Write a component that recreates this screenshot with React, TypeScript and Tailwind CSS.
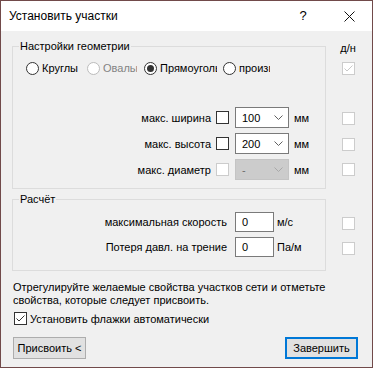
import React from "react";

function Check({ checked, disabled }: { checked?: boolean; disabled?: boolean }) {
  return (
    <span
      className={`flex h-[13px] w-[13px] shrink-0 items-center justify-center border bg-white ${
        disabled ? "border-[#cccccc]" : "border-[#333333]"
      }`}
    >
      {checked ? (
        <svg width="11" height="11" viewBox="0 0 11 11">
          <path d="M1.5 5.5 L4 8 L9.5 2.5" fill="none" stroke={disabled ? "#c8c8c8" : "#333333"} strokeWidth="1" />
        </svg>
      ) : null}
    </span>
  );
}

function Radio({ label, checked, disabled, width, clip }: { label: string; checked?: boolean; disabled?: boolean; width: string; clip: string }) {
  return (
    <div className={`flex items-center ${width}`}>
      <span
        className={`flex h-[13px] w-[13px] shrink-0 items-center justify-center rounded-full border bg-white ${
          disabled ? "border-[#bcbcbc]" : "border-[#333333]"
        }`}
      >
        {checked ? <span className="h-[7px] w-[7px] rounded-full bg-[#333333]" /> : null}
      </span>
      <span className={`ml-[3px] overflow-hidden whitespace-nowrap ${clip} ${disabled ? "text-[#838383]" : ""}`}>{label}</span>
    </div>
  );
}

function Combo({ value, disabled }: { value: string; disabled?: boolean }) {
  return (
    <div
      className={`flex h-[21px] w-[54px] items-center justify-between border pl-[6px] pr-[5px] ${
        disabled ? "border-[#c4c4c4] bg-[#cccccc] text-[#6d6d6d]" : "border-[#7a7a7a] bg-white"
      }`}
    >
      <span>{value}</span>
      <svg width="9" height="5" viewBox="0 0 9 5">
        <path d="M0.5 0.5 L4.5 4.5 L8.5 0.5" fill="none" stroke={disabled ? "#a8a8a8" : "#606060"} strokeWidth="1" />
      </svg>
    </div>
  );
}

function SizeRow({ label, value, disabled }: { label: string; value: string; disabled?: boolean }) {
  return (
    <div className="flex h-[21px] items-center">
      <span className="w-[198px] text-right">{label}</span>
      <span className="ml-[5px]">
        <Check disabled={disabled} />
      </span>
      <span className="ml-[6px]">
        <Combo value={value} disabled={disabled} />
      </span>
      <span className="ml-[5px]">мм</span>
    </div>
  );
}

function CalcRow({ label, unit }: { label: string; unit: string }) {
  return (
    <div className="flex h-[20px] items-center">
      <span className="w-[214px] text-right">{label}</span>
      <div className="ml-[8px] flex h-[20px] w-[39px] items-center border border-[#7a7a7a] bg-white pl-[6px]">0</div>
      <span className="ml-[3px]">{unit}</span>
    </div>
  );
}

export default function App() {
  return (
    <div className="flex h-[368px] w-[373px] flex-col border border-[#714a4a] font-['Liberation_Sans',Arial,sans-serif] text-[11px] leading-[16px] text-black">
      <div className="flex h-[30px] shrink-0 items-center bg-white text-[12px]">
        <span className="pl-[8px]">Установить участки</span>
        <div className="ml-auto flex h-full">
          <div className="flex w-[46px] items-center justify-center text-[13px]">?</div>
          <div className="flex w-[46px] items-center justify-center">
            <svg width="11" height="11" viewBox="0 0 11 11">
              <path d="M0.5 0.5 L10.5 10.5 M10.5 0.5 L0.5 10.5" stroke="#111111" strokeWidth="1" />
            </svg>
          </div>
        </div>
      </div>

      <div className="flex flex-1 flex-col bg-[#f0f0f0] px-[11px] pt-[7px]">
        <div className="flex">
          <div className="flex w-[314px] flex-col">
            <fieldset className="h-[151px] border border-[#dcdcdc]">
              <legend className="ml-[6px] px-px">Настройки геометрии</legend>
              <div className="ml-[13px] mt-[6px] flex h-[16px] items-center">
                <Radio label="Круглый" width="w-[61px]" clip="w-[36px]" />
                <Radio label="Овальный" disabled width="w-[57px]" clip="w-[34px]" />
                <Radio label="Прямоугольный" checked width="w-[79px]" clip="w-[57px]" />
                <Radio label="произвольный" width="w-[48px]" clip="w-[31px]" />
              </div>
              <div className="mt-[31px] flex flex-col gap-[5px]">
                <SizeRow label="макс. ширина" value="100" />
                <SizeRow label="макс. высота" value="200" />
                <SizeRow label="макс. диаметр" value="-" disabled />
              </div>
            </fieldset>
            <fieldset className="mt-[2px] h-[80px] border border-[#dcdcdc]">
              <legend className="ml-[6px] px-px">Расчёт</legend>
              <div className="mt-[5px] flex flex-col gap-[5px]">
                <CalcRow label="максимальная скорость" unit="м/с" />
                <CalcRow label="Потеря давл. на трение" unit="Па/м" />
              </div>
            </fieldset>
          </div>
          <div className="ml-[10px] flex w-[24px] flex-col items-center">
            <span className="mt-[2px]">д/н</span>
            <span className="mt-[6px]">
              <Check checked disabled />
            </span>
            <span className="mt-[37px]">
              <Check disabled />
            </span>
            <span className="mt-[13px]">
              <Check disabled />
            </span>
            <span className="mt-[12px]">
              <Check disabled />
            </span>
            <span className="mt-[41px]">
              <Check disabled />
            </span>
            <span className="mt-[12px]">
              <Check disabled />
            </span>
          </div>
        </div>

        <div className="ml-[1px] mt-[10px] flex flex-col leading-[13px]">
          <span className="whitespace-nowrap">Отрегулируйте желаемые свойства участков сети и отметьте</span>
          <span className="whitespace-nowrap">свойства, которые следует присвоить.</span>
        </div>

        <div className="ml-[2px] mt-[5px] flex h-[13px] items-center gap-[3px]">
          <Check checked />
          <span>Установить флажки автоматически</span>
        </div>

        <div className="mt-[12px] flex items-center justify-between pl-[1px] pr-[3px]">
          <button className="flex h-[22px] w-[73px] items-center justify-center whitespace-nowrap border border-[#adadad] bg-[#e1e1e1]">
            Присвоить &lt;
          </button>
          <button className="flex h-[22px] w-[73px] items-center justify-center whitespace-nowrap border-2 border-[#0078d7] bg-[#e1e1e1]">
            Завершить
          </button>
        </div>
      </div>
    </div>
  );
}
